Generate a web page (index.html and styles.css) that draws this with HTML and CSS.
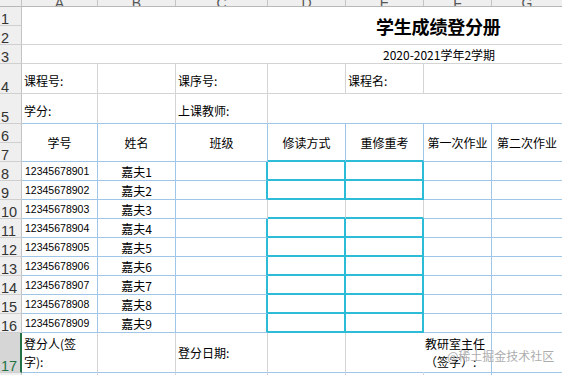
FILE: index.html
```html
<!DOCTYPE html>
<html lang="zh">
<head>
<meta charset="utf-8">
<title>学生成绩登分册</title>
<link rel="stylesheet" href="styles.css">
</head>
<body>
<div class="sheet">
  <div class="ch"></div>
  <div class="ch"><span>A</span></div>
  <div class="ch"><span>B</span></div>
  <div class="ch"><span>C</span></div>
  <div class="ch"><span>D</span></div>
  <div class="ch"><span>E</span></div>
  <div class="ch"><span>F</span></div>
  <div class="ch"><span>G</span></div>

  <div class="rh">1</div>
  <div class="c title">学生成绩登分册</div>
  <div class="rh">2</div>

  <div class="rh">3</div>
  <div class="c sub">2020-2021学年2学期</div>

  <div class="rh">4</div>
  <div class="c lab">课程号:</div>
  <div class="c"></div>
  <div class="c lab">课序号:</div>
  <div class="c"></div>
  <div class="c lab">课程名:</div>
  <div class="c span2"></div>

  <div class="rh">5</div>
  <div class="c lab bb">学分:</div>
  <div class="c bb"></div>
  <div class="c lab bb">上课教师:</div>
  <div class="c bb span4"></div>

  <div class="rh">6</div>
  <div class="c t hd">学号</div>
  <div class="c t hd">姓名</div>
  <div class="c t hd">班级</div>
  <div class="c t hd cb">修读方式</div>
  <div class="c t hd cb">重修重考</div>
  <div class="c t hd">第一次作业</div>
  <div class="c t hd">第二次作业</div>
  <div class="rh">7</div>

  <div class="rh">8</div>
  <div class="c t num">12345678901</div>
  <div class="c t nm">嘉夫1</div>
  <div class="c t cl"></div>
  <div class="c cy"></div>
  <div class="c cy"></div>
  <div class="c t"></div>
  <div class="c t"></div>

  <div class="rh">9</div>
  <div class="c t num">12345678902</div>
  <div class="c t nm">嘉夫2</div>
  <div class="c t cl"></div>
  <div class="c cy"></div>
  <div class="c cy"></div>
  <div class="c t"></div>
  <div class="c t"></div>

  <div class="rh">10</div>
  <div class="c t num">12345678903</div>
  <div class="c t nm">嘉夫3</div>
  <div class="c t gr"></div>
  <div class="c r10"></div>
  <div class="c r10"></div>
  <div class="c t"></div>
  <div class="c t"></div>

  <div class="rh">11</div>
  <div class="c t num">12345678904</div>
  <div class="c t nm">嘉夫4</div>
  <div class="c t cl"></div>
  <div class="c cy"></div>
  <div class="c cy"></div>
  <div class="c t"></div>
  <div class="c t"></div>

  <div class="rh">12</div>
  <div class="c t num">12345678905</div>
  <div class="c t nm">嘉夫5</div>
  <div class="c t cl"></div>
  <div class="c cy"></div>
  <div class="c cy"></div>
  <div class="c t"></div>
  <div class="c t"></div>

  <div class="rh">13</div>
  <div class="c t num">12345678906</div>
  <div class="c t nm">嘉夫6</div>
  <div class="c t cl"></div>
  <div class="c cy"></div>
  <div class="c cy"></div>
  <div class="c t"></div>
  <div class="c t"></div>

  <div class="rh">14</div>
  <div class="c t num">12345678907</div>
  <div class="c t nm">嘉夫7</div>
  <div class="c t cl"></div>
  <div class="c cy"></div>
  <div class="c cy"></div>
  <div class="c t"></div>
  <div class="c t"></div>

  <div class="rh">15</div>
  <div class="c t num">12345678908</div>
  <div class="c t nm">嘉夫8</div>
  <div class="c t cl"></div>
  <div class="c cy"></div>
  <div class="c cy"></div>
  <div class="c t"></div>
  <div class="c t"></div>

  <div class="rh">16</div>
  <div class="c t num">12345678909</div>
  <div class="c t nm">嘉夫9</div>
  <div class="c t cl"></div>
  <div class="c cy"></div>
  <div class="c cy"></div>
  <div class="c t"></div>
  <div class="c t"></div>

  <div class="rh sel">17</div>
  <div class="c lab2 bb">登分人(签<br>字):</div>
  <div class="c bb"></div>
  <div class="c lab bb mid">登分日期:</div>
  <div class="c bb"></div>
  <div class="c bb nr"></div>
  <div class="c lab2 bb br1">教研室主任<br>（签字）:</div>
  <div class="c bb"></div>

  <div class="rh">18</div>
  <div class="c"></div>
  <div class="c"></div>
  <div class="c"></div>
  <div class="c"></div>
  <div class="c"></div>
  <div class="c br1"></div>
  <div class="c"></div>
</div>
<div class="wm">@稀土掘金技术社区</div>
</body>
</html>
```

FILE: styles.css
```css
html, body {
  margin: 0;
  padding: 0;
  background: #fff;
}

body {
  width: 562px;
  height: 375px;
  overflow: hidden;
  position: relative;
  font-family: "Noto Sans CJK SC", "Liberation Sans", sans-serif;
  color: #000;
}

.sheet {
  display: grid;
  grid-template-columns: 22px 76px 78px 92px 78px 78px 68px 71px;
  grid-template-rows: 7px 19px 19px 19px 30px 30px 19px 19px repeat(9, 19px) 40px 19px;
}

.sheet > div {
  box-sizing: border-box;
  display: flex;
  align-items: center;
  overflow: hidden;
  white-space: nowrap;
  border-right: 1px solid #d4d4d4;
  border-bottom: 1px solid #d4d4d4;
  font-size: 12px;
}

/* column header strip */
.sheet > .ch {
  background: #efefef;
  border-right-color: #c4c4c4;
  border-bottom-color: #b8b8b8;
  justify-content: center;
  align-items: flex-end;
}

.ch span {
  font: 14px/14px "Liberation Sans", sans-serif;
  color: #555;
  margin-bottom: -4px;
}

/* row headers */
.sheet > .rh {
  background: #efefef;
  border-right-color: #c4c4c4;
  border-bottom-color: #cfcfcf;
  align-items: flex-end;
  padding-left: 1px;
  font: 14.5px/12px "Liberation Sans", sans-serif;
  color: #333;
}

.sheet > .sel {
  background: #d6d6d6;
  color: #217346;
  border-right: 2px solid #217346;
}

/* merged title rows */
.sheet > .title {
  grid-column: span 7;
  grid-row: span 2;
  border-right: 0;
  padding-left: 354px;
  font-size: 18px;
  font-weight: bold;
  letter-spacing: -0.2px;
}

.sheet > .sub {
  grid-column: span 7;
  border-right: 0;
  padding-left: 361px;
  font-size: 12px;
}

.span2 { grid-column: span 2; }
.span4 { grid-column: span 4; }

.lab {
  padding-left: 2px;
  padding-top: 3px;
}

.sheet > .mid {
  padding-top: 0;
}

.lab2 {
  padding-left: 2px;
  line-height: 18px;
}

/* blue table area */
.sheet > .bb {
  border-bottom-color: #9fc5e8;
}

.sheet > .t {
  border-right-color: #9fc5e8;
  border-bottom-color: #9fc5e8;
}

.hd {
  grid-row: span 2;
  justify-content: center;
  font-size: 12.5px;
}

.sheet > .num {
  padding-left: 3px;
  font-family: "Liberation Sans", sans-serif;
  font-size: 10.5px;
}

.nm {
  justify-content: center;
  font-size: 12px;
}

/* cyan highlighted input block */
.sheet > .cb {
  border-bottom: 2px solid #2cbcd8;
}

.sheet > .cl {
  border-right: 2px solid #2cbcd8;
}

.sheet > .gr {
  border-right-color: #d4d4d4;
}

.sheet > .cy {
  border-right: 2px solid #2cbcd8;
  border-bottom: 2px solid #2cbcd8;
}

.sheet > .r10 {
  border-right-color: #d4d4d4;
  border-bottom: 2px solid #2cbcd8;
}

.sheet > .nr {
  border-right-color: transparent;
}

.sheet > .br1 {
  border-right-color: #9fc5e8;
  padding-left: 1px;
  overflow: visible;
}

/* watermark overlay */
.wm {
  position: absolute;
  left: 447px;
  top: 347px;
  font-size: 12px;
  color: rgba(150, 150, 150, 0.8);
  text-shadow: 0 0 1px #fff;
  white-space: nowrap;
}
```
